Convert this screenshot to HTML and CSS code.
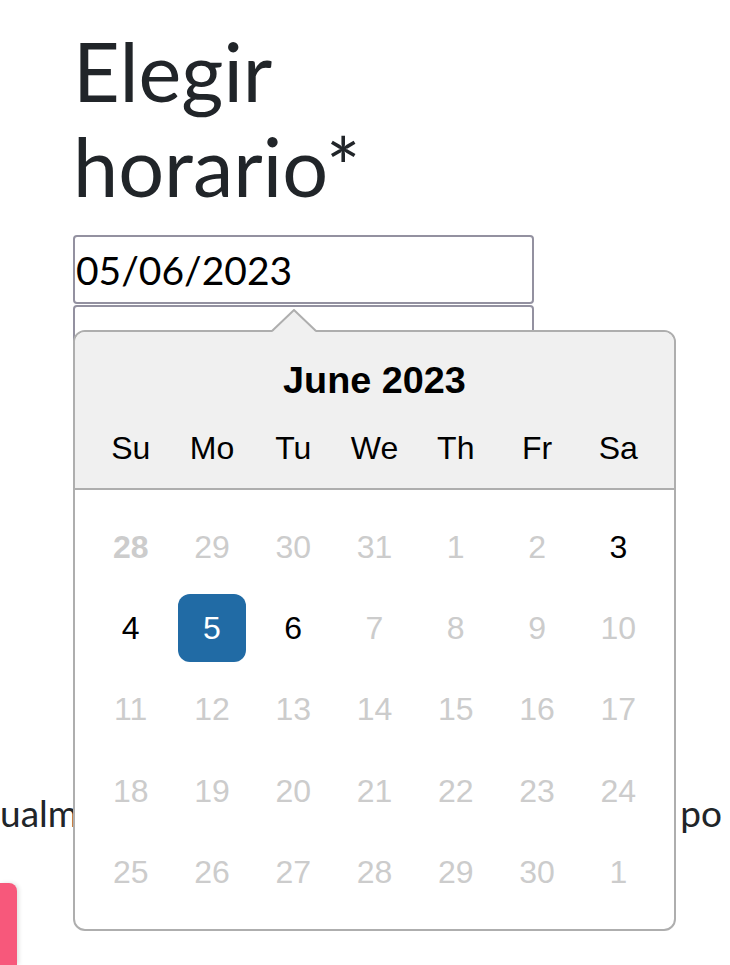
FILE: index.html
```html
<!DOCTYPE html>
<html lang="es">
<head>
<meta charset="utf-8">
<title>Elegir horario</title>
<link rel="stylesheet" href="styles.css">
</head>
<body>
<main class="page">
  <section class="form">
    <h1 class="title">Elegir<br>horario*</h1>
    <div class="date-field">
      <input class="text-input" type="text" value="05/06/2023">
      <div class="popper">
        <svg class="triangle" width="46" height="24" viewBox="0 0 46 24">
          <polygon points="0,24 23,1 46,24" fill="#f0f0f0"/>
          <polyline points="1,22 23,1 45,22" fill="none" stroke="#aeaeae" stroke-width="2"/>
        </svg>
        <div class="calendar">
          <div class="cal-header">
            <div class="cal-month">June 2023</div>
            <div class="week day-names">
              <div class="day-name">Su</div>
              <div class="day-name">Mo</div>
              <div class="day-name">Tu</div>
              <div class="day-name">We</div>
              <div class="day-name">Th</div>
              <div class="day-name">Fr</div>
              <div class="day-name">Sa</div>
            </div>
          </div>
          <div class="cal-body">
            <div class="week days">
              <div class="day disabled today">28</div>
              <div class="day disabled">29</div>
              <div class="day disabled">30</div>
              <div class="day disabled">31</div>
              <div class="day disabled">1</div>
              <div class="day disabled">2</div>
              <div class="day">3</div>

              <div class="day">4</div>
              <div class="day selected">5</div>
              <div class="day">6</div>
              <div class="day disabled">7</div>
              <div class="day disabled">8</div>
              <div class="day disabled">9</div>
              <div class="day disabled">10</div>

              <div class="day disabled">11</div>
              <div class="day disabled">12</div>
              <div class="day disabled">13</div>
              <div class="day disabled">14</div>
              <div class="day disabled">15</div>
              <div class="day disabled">16</div>
              <div class="day disabled">17</div>

              <div class="day disabled">18</div>
              <div class="day disabled">19</div>
              <div class="day disabled">20</div>
              <div class="day disabled">21</div>
              <div class="day disabled">22</div>
              <div class="day disabled">23</div>
              <div class="day disabled">24</div>

              <div class="day disabled">25</div>
              <div class="day disabled">26</div>
              <div class="day disabled">27</div>
              <div class="day disabled">28</div>
              <div class="day disabled">29</div>
              <div class="day disabled">30</div>
              <div class="day disabled">1</div>
            </div>
          </div>
        </div>
      </div>
    </div>
    <input class="text-input time-input" type="text" value="">
  </section>
  <p class="note"><span>ualm</span><span>po</span></p>
  <div class="fab"></div>
</main>
</body>
</html>
```

FILE: styles.css
```css
html, body {
  margin: 0;
  padding: 0;
  background: #ffffff;
  overflow: hidden;
}

.page {
  font-family: Lato, "Liberation Sans", sans-serif;
  color: #212529;
}

.form {
  padding: 23px 0 0 73px;
}

.title {
  margin: 0;
  font-family: Lato, sans-serif;
  font-weight: 400;
  font-size: 81px;
  line-height: 95px;
  color: #212529;
}

.date-field {
  position: relative;
  margin-top: 22px;
  width: 461px;
  height: 69px;
}

.text-input {
  display: block;
  box-sizing: border-box;
  width: 461px;
  height: 69px;
  margin: 0;
  padding: 0 1px;
  border: 2px solid #9391a0;
  border-radius: 4px;
  background: #ffffff;
  font-family: Lato, sans-serif;
  font-size: 39px;
  color: #000000;
  outline: none;
}

.time-input {
  margin-top: 1px;
}

.popper {
  position: absolute;
  top: 95px;
  left: 0;
  z-index: 10;
}

.triangle {
  position: absolute;
  top: -21px;
  left: 198px;
  z-index: 2;
  display: block;
}

.calendar {
  position: relative;
  box-sizing: border-box;
  width: 603px;
  border: 2px solid #aeaeae;
  border-radius: 12px;
  background: #ffffff;
  font-family: "Liberation Sans", Arial, sans-serif;
  font-size: 32px;
  color: #000000;
}

.cal-header {
  background: #f0f0f0;
  border-bottom: 2px solid #aeaeae;
  border-radius: 10px 10px 0 0;
  padding-top: 21px;
}

.cal-month {
  height: 54px;
  line-height: 54px;
  text-align: center;
  font-weight: 700;
  font-size: 37.8px;
}

.week {
  display: grid;
  grid-template-columns: repeat(7, 68px);
  column-gap: 13.28px;
  justify-content: center;
}

.day-names {
  padding: 6.64px 0;
}

.day-name,
.day {
  height: 68px;
  line-height: 68px;
  text-align: center;
}

.cal-body {
  padding: 16px 0;
}

.days {
  padding: 6.64px 0;
  row-gap: 13.28px;
}

.day.disabled {
  color: #cccccc;
}

.day.today {
  font-weight: 700;
}

.day.selected {
  background: #216ba5;
  color: #ffffff;
  border-radius: 12px;
}

.note {
  display: flex;
  justify-content: space-between;
  margin: 417px 0 0 0;
  padding-right: 8px;
  font-family: Lato, sans-serif;
  font-size: 37px;
  line-height: 44px;
  color: #212529;
}

.fab {
  margin-top: 48px;
  width: 17px;
  height: 82px;
  background: #f7587b;
  border-radius: 0 8px 0 0;
  box-shadow: 2px 0 4px rgba(0, 0, 0, 0.12);
}
```
